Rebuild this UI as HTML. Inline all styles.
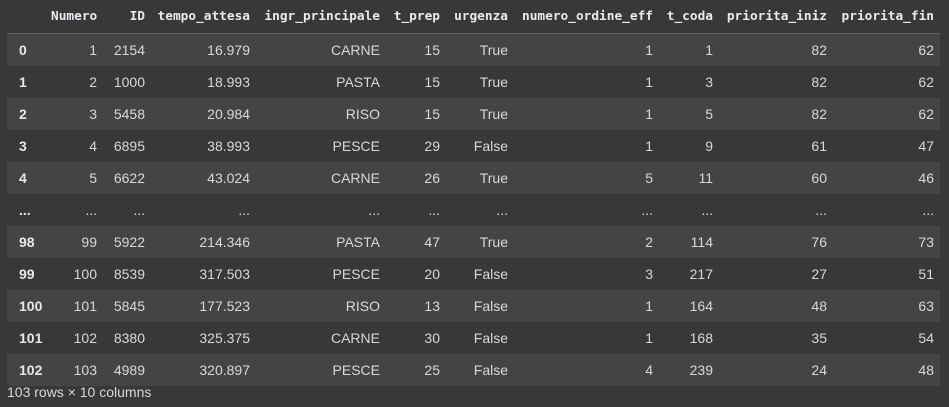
<!DOCTYPE html>
<html><head><style>
html,body{margin:0;padding:0;background:#383838;width:949px;height:407px;overflow:hidden}
table{position:absolute;left:7px;top:0;border-collapse:collapse;table-layout:fixed;width:933px}
th{font-family:"DejaVu Sans Mono",monospace;font-weight:bold;font-size:12.8px;color:#e6ecf2;text-align:right;padding:0 6px;height:33px;border-bottom:1px solid #5f5f5f;white-space:nowrap}
td{font-family:"Liberation Sans",sans-serif;font-size:14px;color:#d8d8d8;text-align:right;padding:0 6px;height:32px;white-space:nowrap}
td:first-child{font-weight:bold;text-align:left;padding-left:12px;color:#e8e8e8}
tbody tr:nth-child(odd){background:#444444}
.f{position:absolute;left:7px;top:384px;font-family:"Liberation Sans",sans-serif;font-size:14px;color:#d8d8d8}
</style></head><body>
<table>
<colgroup><col style="width:38px"><col style="width:58px"><col style="width:48px"><col style="width:105px"><col style="width:130px"><col style="width:60px"><col style="width:68px"><col style="width:145px"><col style="width:60px"><col style="width:114px"><col style="width:107px"></colgroup>
<thead><tr><th></th><th>Numero</th><th>ID</th><th>tempo_attesa</th><th>ingr_principale</th><th>t_prep</th><th>urgenza</th><th>numero_ordine_eff</th><th>t_coda</th><th>priorita_iniz</th><th>priorita_fin</th></tr></thead>
<tbody>
<tr><td>0</td><td>1</td><td>2154</td><td>16.979</td><td>CARNE</td><td>15</td><td>True</td><td>1</td><td>1</td><td>82</td><td>62</td></tr>
<tr><td>1</td><td>2</td><td>1000</td><td>18.993</td><td>PASTA</td><td>15</td><td>True</td><td>1</td><td>3</td><td>82</td><td>62</td></tr>
<tr><td>2</td><td>3</td><td>5458</td><td>20.984</td><td>RISO</td><td>15</td><td>True</td><td>1</td><td>5</td><td>82</td><td>62</td></tr>
<tr><td>3</td><td>4</td><td>6895</td><td>38.993</td><td>PESCE</td><td>29</td><td>False</td><td>1</td><td>9</td><td>61</td><td>47</td></tr>
<tr><td>4</td><td>5</td><td>6622</td><td>43.024</td><td>CARNE</td><td>26</td><td>True</td><td>5</td><td>11</td><td>60</td><td>46</td></tr>
<tr><td>...</td><td>...</td><td>...</td><td>...</td><td>...</td><td>...</td><td>...</td><td>...</td><td>...</td><td>...</td><td>...</td></tr>
<tr><td>98</td><td>99</td><td>5922</td><td>214.346</td><td>PASTA</td><td>47</td><td>True</td><td>2</td><td>114</td><td>76</td><td>73</td></tr>
<tr><td>99</td><td>100</td><td>8539</td><td>317.503</td><td>PESCE</td><td>20</td><td>False</td><td>3</td><td>217</td><td>27</td><td>51</td></tr>
<tr><td>100</td><td>101</td><td>5845</td><td>177.523</td><td>RISO</td><td>13</td><td>False</td><td>1</td><td>164</td><td>48</td><td>63</td></tr>
<tr><td>101</td><td>102</td><td>8380</td><td>325.375</td><td>CARNE</td><td>30</td><td>False</td><td>1</td><td>168</td><td>35</td><td>54</td></tr>
<tr><td>102</td><td>103</td><td>4989</td><td>320.897</td><td>PESCE</td><td>25</td><td>False</td><td>4</td><td>239</td><td>24</td><td>48</td></tr>
</tbody></table>
<div class="f">103 rows × 10 columns</div>
</body></html>
